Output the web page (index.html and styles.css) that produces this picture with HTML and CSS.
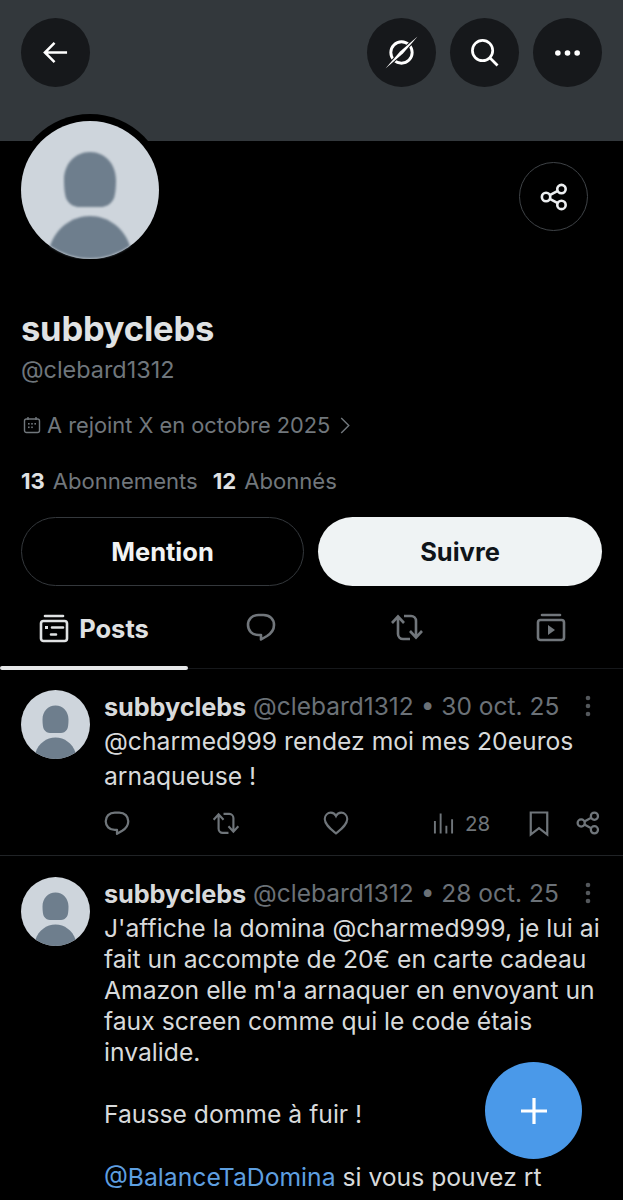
FILE: index.html
```html
<!DOCTYPE html>
<html lang="fr">
<head>
<meta charset="utf-8">
<title>subbyclebs</title>
<link rel="stylesheet" href="styles.css">
</head>
<body>
<svg width="0" height="0" class="defs">
  <symbol id="i-reply" viewBox="0 0 30 30"><path d="M12.500 3h5C24 3 28 7.500 28 13c0 5-3 8.500-7 11l-6 3.500V23h-2.500C6 23 2 18.500 2 13 2 7.500 6 3 12.500 3z" fill="none" stroke="currentColor" stroke-width="2.600" stroke-linejoin="round"/></symbol>
  <symbol id="i-rt" viewBox="0 0 34 30"><path d="M2 11l6-6.500 6 6.500M8 5v17a5 5 0 0 0 5 5h7M14 4h7a5 5 0 0 1 5 5v17M20 19l6 6.500 6-6.500" fill="none" stroke="currentColor" stroke-width="2.600"/></symbol>
  <symbol id="i-heart" viewBox="0 0 30 30"><path d="M15 27C9 22 2 17 2 10.500 2 6 5.500 3 9 3c2.500 0 4.700 1.300 6 4 1.300-2.700 3.500-4 6-4 3.500 0 7 3 7 7.500C28 17 21 22 15 27z" fill="none" stroke="currentColor" stroke-width="2.400"/></symbol>
  <symbol id="i-share" viewBox="0 0 30 30"><g fill="none" stroke="currentColor" stroke-width="2.800"><circle cx="6.500" cy="15" r="4.500"/><circle cx="23" cy="6.500" r="4.500"/><circle cx="23" cy="23.500" r="4.500"/><path d="M10.500 13l8.500-4.500M10.500 17l8.500 4.500"/></g></symbol>
  <symbol id="i-avatar" viewBox="0 0 138 138"><circle cx="69" cy="69" r="69" fill="#ced5dc"/><g class="av-shape"><path d="M69 31c15 0 26 12 26 28 0 9-1 17-3 20-3 5-8 7-12 7H58c-4 0-9-2-12-7-2-3-3-11-3-20 0-16 11-28 26-28z" fill="#6e7e8d"/><path d="M29 125c6-18 22-30 40-30s34 12 40 30a69 69 0 0 1-80 0z" fill="#6e7e8d"/></g></symbol>
</svg>

<header class="banner">
  <a class="round"><svg class="ic24" viewBox="0 0 28 28"><path d="M26 14H4M13 4 3 14l10 10" fill="none" stroke="currentColor" stroke-width="2.600"/></svg></a>
  <div class="banner-right">
    <a class="round"><svg class="ic34" viewBox="0 0 34 34"><circle cx="17" cy="17" r="11" fill="none" stroke="currentColor" stroke-width="3"/><path class="needle" d="M0.500 33.500 15.500 16 33.500 0.500 18.500 18z"/></svg></a>
    <a class="round"><svg class="ic30" viewBox="0 0 30 30"><circle cx="13" cy="13" r="10.500" fill="none" stroke="currentColor" stroke-width="2.800"/><path d="m20.500 20.500 8 8" stroke="currentColor" stroke-width="2.800"/></svg></a>
    <a class="round"><svg class="ic28" viewBox="0 0 28 8"><circle cx="4" cy="4" r="2.900" fill="currentColor"/><circle cx="14" cy="4" r="2.900" fill="currentColor"/><circle cx="24" cy="4" r="2.900" fill="currentColor"/></svg></a>
  </div>
</header>

<section class="profile">
  <div class="profile-top">
    <span class="avatar-ring"><svg class="avatar-big"><use href="#i-avatar"/></svg></span>
    <a class="share-btn"><svg class="ic28b"><use href="#i-share"/></svg></a>
  </div>
  <h1 class="name">subbyclebs</h1>
  <p class="handle">@clebard1312</p>
  <p class="joined">
    <svg class="cal" viewBox="0 0 18 18"><g fill="none" stroke="currentColor" stroke-width="1.400"><rect x="1.500" y="3" width="15" height="13.500" rx="2"/><path d="M5 1v3M13 1v3"/></g><g fill="currentColor"><rect x="5" y="7" width="1.600" height="1.600"/><rect x="8.200" y="7" width="1.600" height="1.600"/><rect x="11.400" y="7" width="1.600" height="1.600"/><rect x="5" y="10.500" width="1.600" height="1.600"/><rect x="8.200" y="10.500" width="1.600" height="1.600"/></g></svg>
    <span>A rejoint X en octobre 2025</span>
    <svg class="chev" viewBox="0 0 10 18"><path d="m1 1 8 8-8 8" fill="none" stroke="currentColor" stroke-width="1.500"/></svg>
  </p>
  <p class="counts"><b>13</b><span class="lab">Abonnements</span><b class="second">12</b><span class="lab">Abonnés</span></p>
  <div class="actions">
    <a class="btn btn-outline">Mention</a>
    <a class="btn btn-solid">Suivre</a>
  </div>
</section>

<nav class="tabs">
  <a class="tab tab-active">
    <svg class="tab-ic" viewBox="0 0 30 30"><g fill="none" stroke="currentColor" stroke-width="2.600" stroke-linecap="round"><rect x="2" y="8" width="26" height="20" rx="2.500"/><path d="M6 3h18"/><path d="M13 14.500h11M12 21.500h5"/></g><rect x="6" y="13" width="3" height="3" fill="currentColor"/></svg>
    <span>Posts</span>
  </a>
  <a class="tab"><svg class="tab-ic"><use href="#i-reply"/></svg></a>
  <a class="tab"><svg class="tab-ic wide"><use href="#i-rt"/></svg></a>
  <a class="tab"><svg class="tab-ic" viewBox="0 0 30 30"><g fill="none" stroke="currentColor" stroke-width="2.600" stroke-linecap="round"><rect x="2" y="8" width="26" height="20" rx="2.500"/><path d="M6 3h18"/></g><path d="M12 13v10l7-5z" fill="currentColor"/></svg></a>
</nav>

<article class="post">
  <svg class="avatar-small"><use href="#i-avatar"/></svg>
  <div class="post-body">
    <div class="post-head"><b>subbyclebs</b><span class="meta">@clebard1312 • 30 oct. 25</span>
      <svg class="kebab" viewBox="0 0 6 22"><circle cx="3" cy="3" r="2.300"/><circle cx="3" cy="11" r="2.300"/><circle cx="3" cy="19" r="2.300"/></svg></div>
    <p class="post-text post-text-open">@charmed999 rendez moi mes 20euros<br>arnaqueuse !</p>
    <div class="post-actions">
      <svg class="act"><use href="#i-reply"/></svg>
      <svg class="act act-rt"><use href="#i-rt"/></svg>
      <svg class="act"><use href="#i-heart"/></svg>
      <span class="views"><svg class="bars" viewBox="0 0 22 22"><path d="M2 9v13M8 1v21M14 14v8M20 7v15" stroke="currentColor" stroke-width="2"/></svg>28</span>
      <svg class="act act-mark" viewBox="0 0 24 28"><path d="M3 2h18v24l-9-7-9 7z" fill="none" stroke="currentColor" stroke-width="2.400"/></svg>
      <svg class="act act-share"><use href="#i-share"/></svg>
    </div>
  </div>
</article>

<article class="post post-two">
  <svg class="avatar-small"><use href="#i-avatar"/></svg>
  <div class="post-body">
    <div class="post-head"><b>subbyclebs</b><span class="meta">@clebard1312 • 28 oct. 25</span>
      <svg class="kebab" viewBox="0 0 6 22"><circle cx="3" cy="3" r="2.300"/><circle cx="3" cy="11" r="2.300"/><circle cx="3" cy="19" r="2.300"/></svg></div>
    <p class="post-text post-text-long">J'affiche la domina @charmed999, je lui ai<br>fait un accompte de 20€ en carte cadeau<br>Amazon elle m'a arnaquer en envoyant un<br>faux screen comme qui le code étais<br>invalide.</p>
    <p class="post-text para">Fausse domme à fuir !</p>
    <p class="post-text para para-last"><span class="link">@BalanceTaDomina</span> si vous pouvez rt</p>
  </div>
</article>

<a class="fab"><svg class="fab-ic" viewBox="0 0 28 28"><path d="M14 1v26M1 14h26" stroke="currentColor" stroke-width="3.200"/></svg></a>
</body>
</html>
```

FILE: styles.css
```css
* { box-sizing: border-box; }
html, body { margin: 0; padding: 0; }
body {
  width: 623px;
  height: 1200px;
  overflow: hidden;
  position: relative;
  background: #000;
  color: #e7e9ea;
  font-family: Inter, "Liberation Sans", sans-serif;
}
p, h1 { margin: 0; }
.defs { position: absolute; }
.av-shape { filter: blur(0.8px); }

.banner {
  height: 141px;
  background: #33383c;
  padding: 18px 21px 0;
  display: flex;
  justify-content: space-between;
  align-items: flex-start;
}
.banner-right { display: flex; gap: 14px; }
.round {
  width: 69px;
  height: 69px;
  border-radius: 50%;
  background: #16181b;
  color: #fff;
  display: flex;
  align-items: center;
  justify-content: center;
}
.ic24 { width: 27px; height: 27px; }
.ic34 { width: 33px; height: 33px; }
.ic30 { width: 29px; height: 29px; }
.ic28 { width: 27px; height: 8px; }
.ic28b { width: 28px; height: 28px; }
.needle {
  fill: #fff;
  stroke: #16181b;
  stroke-width: 2px;
  paint-order: stroke;
}

.profile { padding: 0 21px; }
.profile-top {
  height: 118px;
  display: flex;
  justify-content: space-between;
  align-items: flex-start;
}
.avatar-ring {
  display: block;
  width: 152px;
  height: 152px;
  margin: -27px 0 0 -7px;
  padding: 7px;
  background: #000;
  border-radius: 50%;
}
.avatar-big { display: block; width: 138px; height: 138px; }
.share-btn {
  width: 69px;
  height: 69px;
  margin: 21px 14px 0 0;
  border: 1.500px solid #3f4347;
  border-radius: 50%;
  color: #eceef0;
  display: flex;
  align-items: center;
  justify-content: center;
}
.name {
  margin-top: 50px;
  font-size: 34.500px;
  line-height: 40px;
  font-weight: 700;
  letter-spacing: -0.2px;
  color: #e0e2e3;
}
.handle {
  margin-top: 1px;
  font-size: 23.400px;
  line-height: 40px;
  color: #6f767c;
}
.joined {
  margin-top: 20px;
  height: 30px;
  display: flex;
  align-items: center;
  gap: 6px;
  font-size: 21.800px;
  color: #71777c;
}
.cal { width: 18px; height: 18px; margin-left: 2px; }
.chev { width: 10px; height: 17px; margin-left: 4px; }
.counts {
  margin-top: 26px;
  height: 30px;
  display: flex;
  align-items: center;
  font-size: 22.100px;
  color: #71777c;
}
.counts b { color: #e0e2e3; font-weight: 700; }
.counts .second { margin-left: 15px; }
.lab { margin-left: 8px; }
.actions {
  margin-top: 21px;
  display: flex;
  gap: 14px;
}
.btn {
  flex: none;
  height: 69px;
  border-radius: 35px;
  display: flex;
  align-items: center;
  justify-content: center;
  font-size: 25.500px;
  font-weight: 700;
}
.btn-outline { width: 283px; border: 1.500px solid #34383c; color: #f1f3f4; }
.btn-solid { width: 284px; background: #eff3f4; color: #0f1419; }

.tabs {
  height: 83px;
  display: flex;
  border-bottom: 1px solid #16181b;
}
.tab {
  width: 25%;
  height: 83px;
  display: flex;
  align-items: flex-start;
  justify-content: center;
  gap: 10px;
  padding-top: 26px;
  color: #71767b;
  position: relative;
}
.tab-active {
  width: 188px;
  color: #e0e2e3;
  font-size: 25.500px;
  font-weight: 700;
  line-height: 32px;
  padding-top: 27px;
}
.tab-active::after {
  content: "";
  position: absolute;
  left: 0;
  right: 0;
  bottom: -1px;
  height: 4px;
  border-radius: 2px;
  background: #e6e8e9;
}
.tab:nth-child(2) { width: 146px; }
.tab:nth-child(3) { width: 145px; }
.tab:nth-child(4) { width: 144px; }
.tab-ic { width: 30px; height: 30px; }
.tab-ic.wide { width: 34px; }

.post {
  display: flex;
  gap: 14px;
  padding: 21px 21px 0;
  height: 187px;
  border-bottom: 1px solid #202326;
}
.post-two { height: auto; border-bottom: 0; }
.avatar-small { width: 69px; height: 69px; flex: none; }
.post-body { flex: 1; min-width: 0; }
.post-head {
  display: flex;
  align-items: center;
  height: 32px;
  font-size: 24.500px;
  white-space: nowrap;
}
.post-head b { color: #d8dadb; font-weight: 700; font-size: 25.300px; letter-spacing: -0.1px; }
.meta { margin-left: 7px; color: #6b7177; }
.kebab { width: 6px; height: 22px; margin-left: auto; margin-right: 11px; fill: #54585c; }
.post-text {
  font-size: 24.700px;
  line-height: 31px;
  color: #d8dadb;
  white-space: nowrap;
}
.post-text-open { margin-top: 1.500px; line-height: 35px; }
.post-text-long { margin-top: 3.500px; }
.para { margin-top: 31px; }
.para-last { margin-top: 32px; }
.link { color: #5e9fe0; }
.post-actions {
  margin-top: 15.500px;
  height: 28px;
  display: flex;
  align-items: center;
  color: #6f757a;
  position: relative;
}
.act { width: 26px; height: 26px; flex: none; margin-right: 82px; }
.act-rt { width: 28px; margin-right: 83px; }
.views {
  display: flex;
  align-items: center;
  gap: 11px;
  font-size: 20.500px;
  margin-left: 2px;
}
.bars { width: 21px; height: 22px; }
.act-mark { width: 22px; height: 27px; margin: 0 0 0 38px; }
.act-share { width: 24px; height: 26px; margin: 0 0 0 26px; }

.fab {
  position: absolute;
  left: 485px;
  top: 1062px;
  width: 97px;
  height: 97px;
  border-radius: 50%;
  background: #4a99e9;
  color: #fff;
  display: flex;
  align-items: center;
  justify-content: center;
}
.fab-ic { width: 28px; height: 28px; }
```
